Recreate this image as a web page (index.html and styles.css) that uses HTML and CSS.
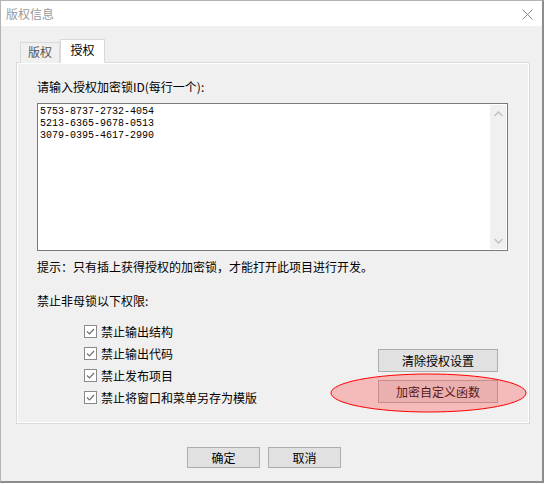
FILE: index.html
```html
<!DOCTYPE html>
<html lang="zh-CN">
<head>
  <meta charset="UTF-8">
  <title>版权信息</title>
  <link rel="stylesheet" href="styles.css">
</head>
<body>

<div class="dialog">
  <div class="titlebar">
    <span class="title">版权信息</span>
    <svg class="close" width="11" height="11" viewBox="0 0 11 11">
      <path d="M0.5 0.5 L10.5 10.5 M10.5 0.5 L0.5 10.5" stroke="#8a8a8a" stroke-width="1" fill="none"/>
    </svg>
  </div>

  <div class="dialog-body">
    <div class="tabs">
      <div class="tab">版权</div>
      <div class="tab active">授权</div>
    </div>

    <div class="panel">
      <div class="label">请输入授权加密锁ID(每行一个):</div>

      <div class="textbox">
        <div class="lines">
          <div>5753-8737-2732-4054</div>
          <div>5213-6365-9678-0513</div>
          <div>3079-0395-4617-2990</div>
        </div>
        <div class="scrollbar">
          <svg width="9" height="6" viewBox="0 0 9 6"><path d="M0.5 5 L4.5 1 L8.5 5" stroke="#c2c2c2" stroke-width="1.5" fill="none"/></svg>
          <svg width="9" height="6" viewBox="0 0 9 6"><path d="M0.5 1 L4.5 5 L8.5 1" stroke="#c2c2c2" stroke-width="1.5" fill="none"/></svg>
        </div>
      </div>

      <div class="hint">提示：只有插上获得授权的加密锁，才能打开此项目进行开发。</div>

      <div class="lower">
        <div class="perms">
          <div class="label">禁止非母锁以下权限:</div>
          <ul class="checks">
            <li><span class="box"><svg width="11" height="11" viewBox="0 0 11 11"><path d="M2 5.5 L4.5 8 L9 3" stroke="#707070" stroke-width="1.2" fill="none"/></svg></span>禁止输出结构</li>
            <li><span class="box"><svg width="11" height="11" viewBox="0 0 11 11"><path d="M2 5.5 L4.5 8 L9 3" stroke="#707070" stroke-width="1.2" fill="none"/></svg></span>禁止输出代码</li>
            <li><span class="box"><svg width="11" height="11" viewBox="0 0 11 11"><path d="M2 5.5 L4.5 8 L9 3" stroke="#707070" stroke-width="1.2" fill="none"/></svg></span>禁止发布项目</li>
            <li><span class="box"><svg width="11" height="11" viewBox="0 0 11 11"><path d="M2 5.5 L4.5 8 L9 3" stroke="#707070" stroke-width="1.2" fill="none"/></svg></span>禁止将窗口和菜单另存为模版</li>
          </ul>
        </div>
        <div class="actions">
          <button class="btn wide">清除授权设置</button>
          <button class="btn wide">加密自定义函数</button>
        </div>
      </div>

      <!-- highlight drawn over the button -->
      <svg class="mark" width="197" height="40" viewBox="0 0 197 40">
        <ellipse cx="98.5" cy="20" rx="97.5" ry="19" fill="rgba(255,70,70,0.32)" stroke="#ff0000" stroke-width="1"/>
      </svg>
    </div>

    <div class="footer">
      <button class="btn">确定</button>
      <button class="btn">取消</button>
    </div>
  </div>
</div>

</body>
</html>
```

FILE: styles.css
```css
body {
  margin: 0;
  background: #ffffff;
  font-family: "Noto Sans CJK SC", "Noto Sans", sans-serif;
  font-size: 12px;
  color: #000;
}

.dialog {
  box-sizing: border-box;
  width: 544px;
  height: 483px;
  border-top: 1px solid #b4b4b4;
  border-left: 1px solid #b4b4b4;
  border-right: 2px solid #8c8c8c;
  border-bottom: 2px solid #8c8c8c;
  display: flex;
  flex-direction: column;
}

.titlebar {
  height: 25px;
  flex: none;
  background: #fff;
  display: flex;
  align-items: center;
  justify-content: space-between;
  padding: 0 9px 0 5px;
}

.title {
  color: #9a9a9a;
  font-size: 12px;
  line-height: 14px;
}

.close {
  display: block;
  margin-top: 1px;
}

.dialog-body {
  flex: 1;
  background: #f0f0f0;
  padding: 13px 0 0 15px;
}

.tabs {
  display: flex;
  align-items: flex-end;
  padding-left: 4px;
  position: relative;
  z-index: 1;
  margin-bottom: -1px;
}

.tab {
  box-sizing: border-box;
  width: 40px;
  height: 21px;
  border: 1px solid #d9d9d9;
  border-bottom: none;
  background: #f0f0f0;
  color: #555;
  text-align: center;
  line-height: 18px;
}

.tab.active {
  width: 45px;
  height: 24px;
  background: #fff;
  color: #000;
  line-height: 19px;
  border-bottom: 1px solid #fff;
}

.panel {
  position: relative;
  box-sizing: border-box;
  width: 514px;
  height: 362px;
  border: 1px solid #d9d9d9;
  box-shadow: inset 1px 1px 0 #fff, inset -1px -1px 0 #fff;
  padding: 17px 21px 0 20px;
}

.label {
  line-height: 14px;
}

.textbox {
  box-sizing: border-box;
  margin-top: 9px;
  height: 148px;
  border: 1px solid #7a7a7a;
  background: #fff;
  display: flex;
  padding: 1px;
}

.lines {
  flex: 1;
  padding: 1px 0 0 1px;
  font-family: "Liberation Mono", "DejaVu Sans Mono", monospace;
  font-size: 10px;
  line-height: 12px;
  color: #000;
}

.scrollbar {
  width: 16px;
  background: #f0f0f0;
  display: flex;
  flex-direction: column;
  justify-content: space-between;
  align-items: center;
  padding: 6px 0 5px;
}

.scrollbar svg {
  display: block;
}

.hint {
  margin-top: 9px;
  line-height: 14px;
}

.lower {
  margin-top: 20px;
  display: flex;
  justify-content: space-between;
}

.checks {
  list-style: none;
  margin: 12px 0 0 47px;
  padding: 0;
}

.checks li {
  height: 22px;
  display: flex;
  align-items: center;
}

.box {
  box-sizing: border-box;
  width: 13px;
  height: 13px;
  border: 1px solid #8a8a8a;
  background: #fff;
  margin-right: 4px;
  display: flex;
  align-items: center;
  justify-content: center;
}

.box svg {
  display: block;
}

.actions {
  display: flex;
  flex-direction: column;
  justify-content: flex-end;
  gap: 8px;
  padding: 0 10px 5px 0;
}

.btn {
  box-sizing: border-box;
  width: 73px;
  height: 21px;
  padding: 0;
  margin: 0;
  border: 1px solid #adadad;
  background: #e1e1e1;
  font-family: inherit;
  font-size: 12px;
  color: #000;
}

.btn.wide {
  width: 120px;
  height: 23px;
}

.mark {
  position: absolute;
  left: 313px;
  top: 310px;
}

.footer {
  display: flex;
  gap: 8px;
  padding: 23px 0 0 171px;
}
```
